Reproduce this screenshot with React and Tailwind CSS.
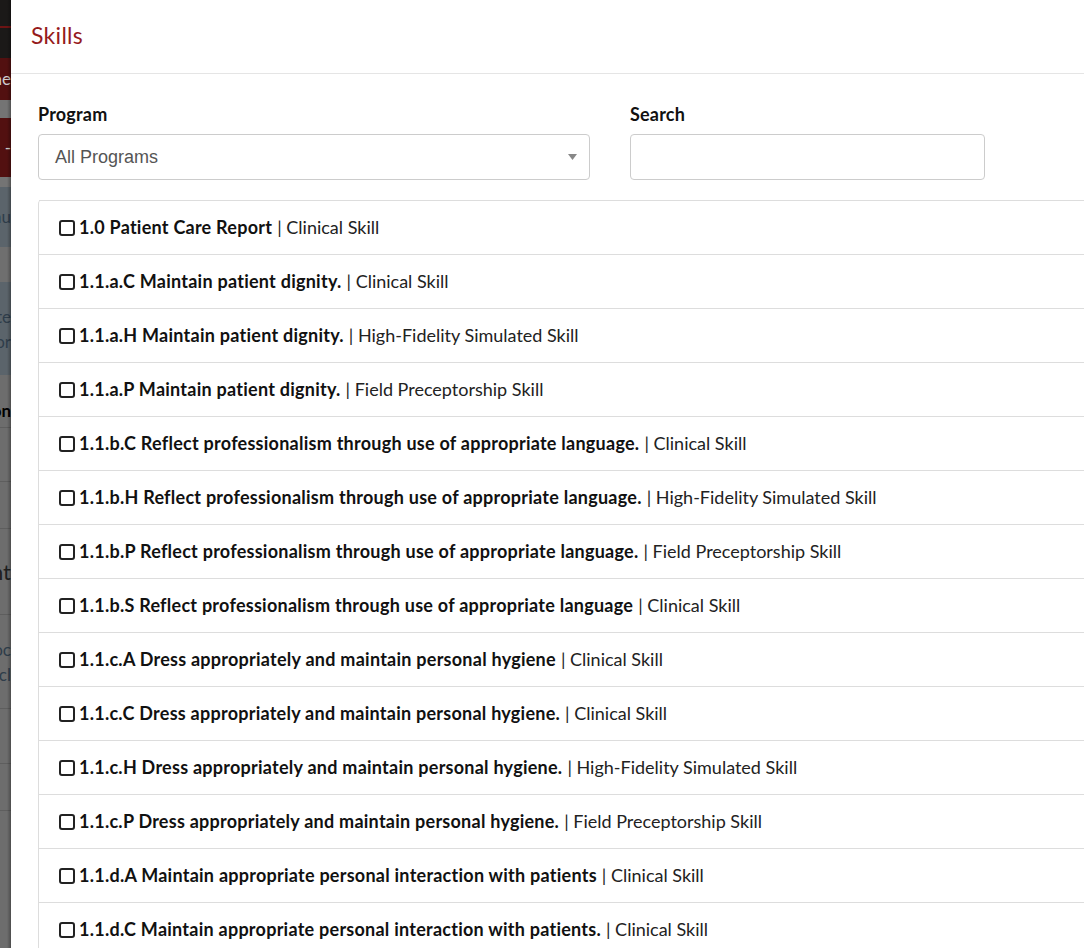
const skills = [
  ['1.0 Patient Care Report', 'Clinical Skill'],
  ['1.1.a.C Maintain patient dignity.', 'Clinical Skill'],
  ['1.1.a.H Maintain patient dignity.', 'High-Fidelity Simulated Skill'],
  ['1.1.a.P Maintain patient dignity.', 'Field Preceptorship Skill'],
  ['1.1.b.C Reflect professionalism through use of appropriate language.', 'Clinical Skill'],
  ['1.1.b.H Reflect professionalism through use of appropriate language.', 'High-Fidelity Simulated Skill'],
  ['1.1.b.P Reflect professionalism through use of appropriate language.', 'Field Preceptorship Skill'],
  ['1.1.b.S Reflect professionalism through use of appropriate language', 'Clinical Skill'],
  ['1.1.c.A Dress appropriately and maintain personal hygiene', 'Clinical Skill'],
  ['1.1.c.C Dress appropriately and maintain personal hygiene.', 'Clinical Skill'],
  ['1.1.c.H Dress appropriately and maintain personal hygiene.', 'High-Fidelity Simulated Skill'],
  ['1.1.c.P Dress appropriately and maintain personal hygiene.', 'Field Preceptorship Skill'],
  ['1.1.d.A Maintain appropriate personal interaction with patients', 'Clinical Skill'],
  ['1.1.d.C Maintain appropriate personal interaction with patients.', 'Clinical Skill'],
  ['1.1.d.H Maintain appropriate personal interaction with patients.', 'High-Fidelity Simulated Skill'],
];

// page behind the modal, dimmed by the backdrop
function Backdrop() {
  return (
    <div className="relative w-[11px] shrink-0 flex flex-col overflow-hidden text-[17px] font-['Lato',sans-serif]">
      <div className="h-[26px] shrink-0 bg-[#1b1918]" />
      <div className="h-[2px] shrink-0 bg-[#6e1414]" />
      <div className="h-[30px] shrink-0 bg-[#1b1918]" />
      <div className="h-[42px] shrink-0 bg-[#521010] flex items-center justify-end whitespace-nowrap text-[#cfcfcf]">Home</div>
      <div className="h-[18px] shrink-0 bg-[#747474]" />
      <div className="h-[59px] shrink-0 bg-[#521010] flex items-center justify-end whitespace-nowrap text-[#cfcfcf]">-</div>
      <div className="h-[10px] shrink-0 bg-[#747474]" />
      <div className="h-[60px] shrink-0 bg-[#5b646b] flex items-center justify-end whitespace-nowrap text-[#2f3d4a]">Menu</div>
      <div className="h-[35px] shrink-0 bg-[#6f6f6f]" />
      <div className="h-[93px] shrink-0 bg-[#5b646b] flex flex-col justify-center items-end whitespace-nowrap text-[#2f3d4a] leading-[25px]">
        <span>Create</span>
        <span>Recor</span>
      </div>
      <div className="h-[53px] shrink-0 bg-[#6d6d6d] flex items-end justify-end pb-1 whitespace-nowrap font-bold text-black border-b border-[#5e5e5e]">Action</div>
      <div className="h-[54px] shrink-0 bg-[#6d6d6d] border-b border-[#5e5e5e]" />
      <div className="h-[47px] shrink-0 bg-[#6d6d6d] border-b border-[#5e5e5e]" />
      <div className="h-[86px] shrink-0 bg-[#6d6d6d] flex items-center justify-end whitespace-nowrap text-[22px] text-[#1e1e1e] border-b border-[#5e5e5e]">Event</div>
      <div className="h-[94px] shrink-0 bg-[#6d6d6d] flex flex-col justify-center items-end whitespace-nowrap text-[#2f3d4a] leading-[25px] border-b border-[#5e5e5e]">
        <span>Doc</span>
        <span>Incl</span>
      </div>
      <div className="h-[55px] shrink-0 bg-[#6d6d6d] border-b border-[#5e5e5e]" />
      <div className="h-[47px] shrink-0 bg-[#6d6d6d] border-b border-[#5e5e5e]" />
      <div className="flex-1 bg-[#6d6d6d]" />
      <div className="absolute inset-y-0 right-0 w-[4px] bg-gradient-to-r from-transparent to-black/30" />
    </div>
  );
}

function SkillRow({ title, kind }) {
  return (
    <div className="h-[54px] shrink-0 flex items-center pl-[20px] border-t border-[#dddddd] whitespace-nowrap text-[18px] text-[#111]">
      <span className="shrink-0 w-[16px] h-[16px] border-2 border-[#222] rounded-[3px] mr-[4px]" />
      <span className="font-bold tracking-[0.25px]">{title}</span>
      <span className="ml-[5px] text-[#222]">| {kind}</span>
    </div>
  );
}

export default function App() {
  return (
    <div className="w-[1084px] h-[948px] overflow-hidden flex bg-white">
      <Backdrop />
      <div className="flex-1 min-w-0 bg-white rounded-tl-[6px] font-['Lato',sans-serif] flex flex-col">
        <div className="h-[74px] shrink-0 border-b border-[#e5e5e5] flex items-center pl-[20px] pb-[2px]">
          <h4 className="text-[23px] tracking-[0.3px] text-[#961b1b]">Skills</h4>
        </div>

        <div className="shrink-0 pl-[27px] pt-[27px]">
          <div className="flex gap-[40px]">
            <div className="w-[552px]">
              <label className="block font-bold text-[18px] tracking-[0.2px] text-[#111] mb-[6px]">Program</label>
              <div className="h-[46px] border border-[#cccccc] rounded-[4px] flex items-center justify-between pl-[16px] pr-[12px] font-['Liberation_Sans',sans-serif] text-[18px] text-[#555]">
                <span>All Programs</span>
                <svg width="9" height="6" viewBox="0 0 9 6"><path d="M0 0h9L4.5 6z" fill="#888" /></svg>
              </div>
            </div>
            <div className="w-[355px]">
              <label className="block font-bold text-[18px] tracking-[0.2px] text-[#111] mb-[6px]">Search</label>
              <input className="w-full h-[46px] border border-[#cccccc] rounded-[4px] outline-none px-3" />
            </div>
          </div>

          <div className="mt-[20px] border-l border-[#dddddd] rounded-tl-[4px] -mr-[20px]">
            {skills.map(([title, kind]) => (
              <SkillRow key={title} title={title} kind={kind} />
            ))}
          </div>
        </div>
      </div>
    </div>
  );
}
